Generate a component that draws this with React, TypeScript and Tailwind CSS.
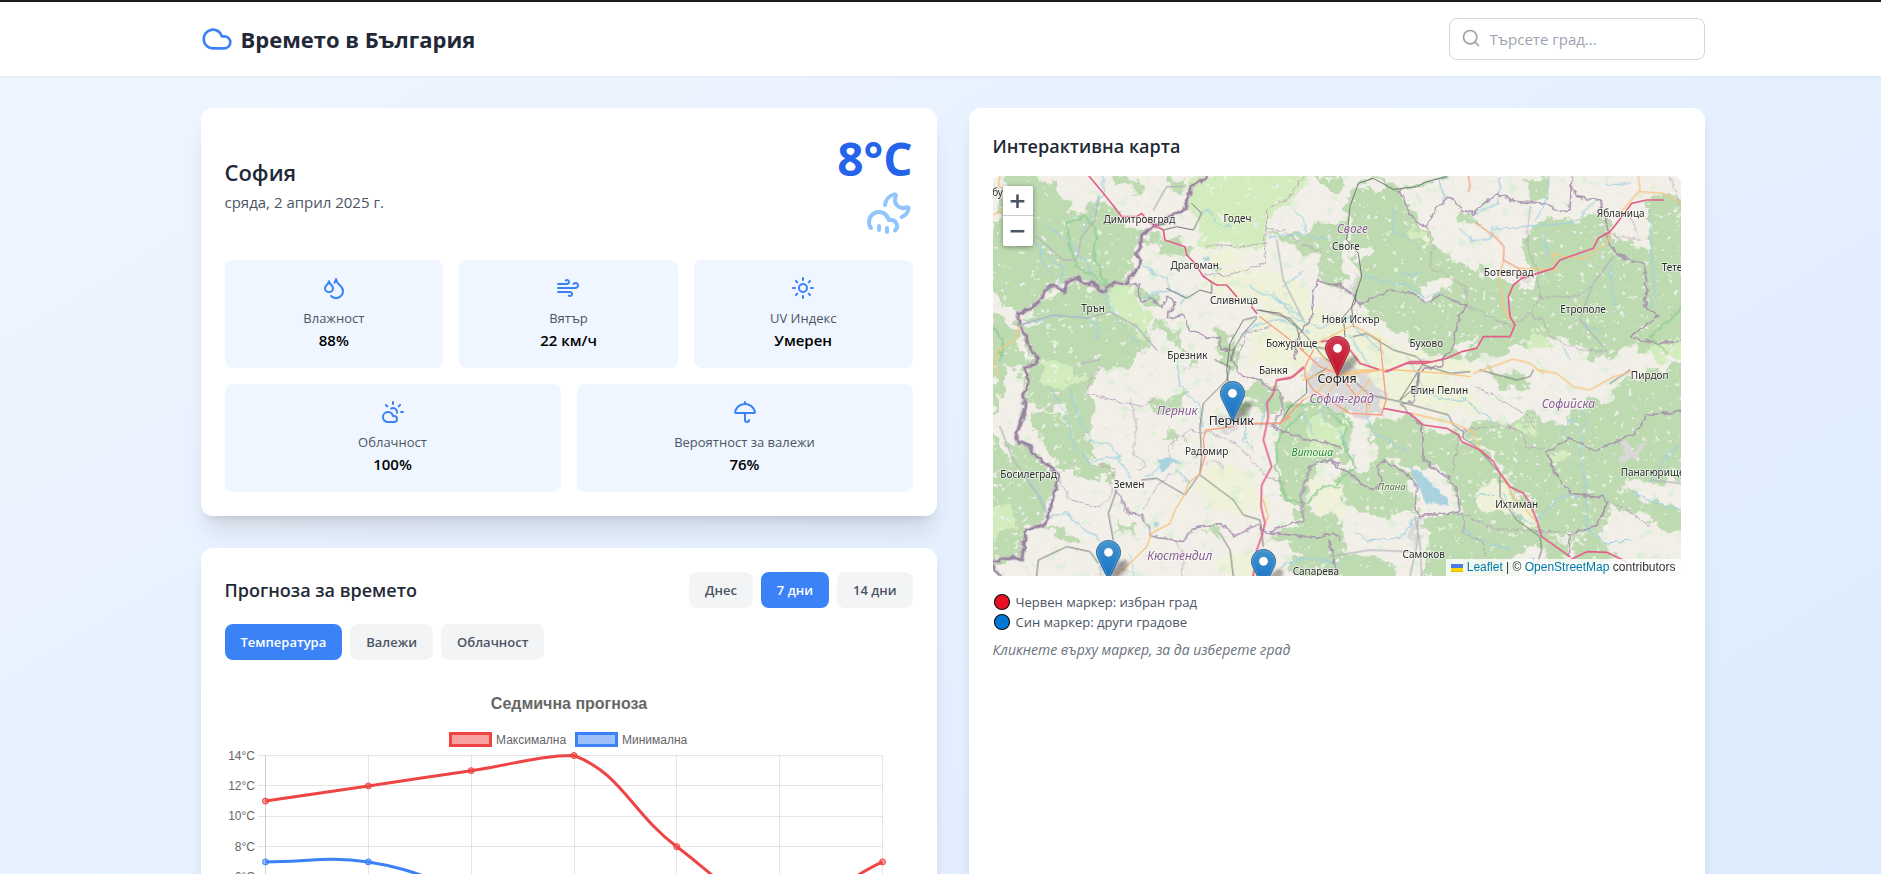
import { useState } from 'react';
import type { ReactNode } from 'react';
import { Cloud, CloudMoonRain, CloudSun, Droplets, Search, Sun, Umbrella, Wind } from 'lucide-react';

type Sector = 'nw' | 'ne' | 'sw' | 'se' | 'c';
type Shape = [Sector, string];

const origin: Record<Sector, string> = {
  nw: 'translate(-69 -168)',
  ne: 'translate(1011 -48)',
  sw: 'translate(-69 552)',
  se: 'translate(1011 582)',
  c: 'translate(651 342)',
};

const forests: Shape[] = [
  ['nw', 'M150 160L240 180L290 240L330 270L380 250L440 300L510 340L500 400L470 480L400 510L350 480L290 485L240 500L190 550L140 580L110 540L60 500V300L95 300L110 160Z'],
  ['nw', 'M410 230L450 280L430 300L380 250ZM410 160L450 200L520 220L500 190L450 160ZM600 190L640 170L650 200L610 220Z'],
  ['nw', 'M320 500L480 490L505 540L540 600L545 660L500 720L480 740H200L140 610L220 540Z'],
  ['nw', 'M60 590L110 600L150 690L200 740H60Z'],
  ['nw', 'M1030 160H1120V215L1060 190ZM1000 330L1120 300V520L1050 480L1040 410L900 350Z'],
  ['nw', 'M530 350L600 340L640 375L680 385L640 410L560 390ZM490 490L560 520L600 560L560 560L510 540ZM550 610L600 620L660 690L610 670ZM720 440L760 450L730 480Z'],
  ['ne', 'M70 80L190 80L220 110L250 170L300 205L310 250L350 280L420 310L470 350L540 370L600 390L620 330L590 310L580 240L610 200L650 180L700 170L800 160L840 180L860 250L900 240L960 270L940 180L950 120L1070 100V570L980 570L900 560L830 610L760 560L650 530L620 550L560 570L460 590L380 610L340 590L300 440L220 410L140 410L70 440L80 350L60 230L45 160Z'],
  ['ne', 'M590 60L660 55L655 120L600 115ZM380 165L430 150L450 200L400 190ZM80 440L180 400L300 430L400 430L410 450L370 560L300 590L220 520L140 470Z'],
  ['sw', 'M170 -10H470L400 20L360 60L350 100L380 160L350 220L370 300L300 250L280 130L230 150L170 120L160 70Z'],
  ['sw', 'M60 0H90L110 40L75 150L60 160ZM60 190L100 300L130 280L110 250L140 245L230 310L260 360L240 440L220 490L160 510L150 600L60 600Z'],
  ['sw', 'M180 160L270 150L320 260L370 310L420 330L430 370L360 360L330 345L270 330L240 270L190 210Z'],
  ['sw', 'M970 450L1010 440L1120 490V600L1020 590L960 560L900 540L890 520L990 510ZM930 200L1000 160L1120 120V300L1060 300L1010 380L1000 450L930 400L915 330L920 260Z'],
  ['sw', 'M530 110L600 120L650 100L640 140L560 150ZM230 500L290 500L330 560L280 540ZM430 470L500 510L470 530ZM400 560L450 590L410 600ZM590 200L650 230L600 260ZM760 120L860 140L800 180ZM960 640L990 560L1120 600V660ZM700 520L760 500L750 530ZM620 20L700 10L690 40Z'],
  ['c', 'M500 -10H790V50L720 170L640 170L580 130L480 90L440 60ZM100 290L200 290L240 340L190 370L130 350ZM0 120L60 130L100 200L60 240L20 180Z'],
  ['c', 'M230 350L300 330L390 380L430 410V520H200L215 420ZM490 400L620 390L660 450L640 520H500Z'],
  ['se', 'M120 150L240 140L290 170L380 200L450 240L500 300L560 360L600 400L640 480L720 510L700 600H400L340 520L330 450L400 430L380 370L350 320L290 280L240 300L190 270L130 240Z'],
  ['se', 'M400 170L560 150L600 130L700 170L740 110L830 90L870 40L920 20L1070 -20V320L960 340L900 330L880 350L940 380L1060 420V490L980 470L940 430L880 420L840 400L830 450L800 480L720 500L640 480L600 380L540 330L510 290L470 240Z'],
  ['se', 'M50 300L150 270L250 320L260 430L180 440L80 420L10 330ZM-40 560L100 550L200 590V630H-40ZM280 450L400 430L560 470L640 500V630H300ZM720 510L800 480L860 560L760 600ZM450 0L600 20L620 90L540 60Z'],
];

const meadows: Shape[] = [
  ['nw', 'M660 190L720 160H1010L980 220L940 260L890 300V370L790 380L700 375L690 300L640 260Z'],
  ['nw', 'M400 510L490 500L540 600L530 650L440 600Z'],
  ['sw', 'M200 20L290 10L340 60L260 90ZM1000 230L1060 190L1120 180V270L1020 300ZM60 450L130 420L140 500L70 540Z'],
  ['ne', 'M600 500L660 520L650 580L600 560ZM960 560L1060 540V600L980 600ZM250 200L290 200L300 250L250 240Z'],
  ['se', 'M540 150L620 160L610 190L560 180ZM650 260L700 250L720 270L670 280Z'],
  ['c', 'M280 400L330 370L360 440L300 480Z'],
];

const farmland: Shape[] = [
  ['c', 'M150 80L250 30L400 100L500 130L640 190L740 210L790 230V370L560 350L520 370L300 260L200 250L120 220Z'],
  ['nw', 'M700 470L890 440L1020 500L1000 620L860 560L720 520ZM690 385L840 400L800 440L700 420Z'],
  ['sw', 'M690 350L760 300L860 370L890 440L800 460L740 450L680 400L640 420ZM1050 400L1120 360V480L1050 450ZM750 580L850 560V648H750Z'],
  ['se', 'M170 60L380 30L400 130L200 110ZM-60 330L30 340L60 430L-50 400Z'],
];

const clearings: Shape[] = [
  ['ne', 'M260 380L350 345L370 370L290 420ZM840 180L900 130L960 150L930 240L850 235ZM70 270L130 260V295L80 300ZM370 550L440 540L400 600ZM540 570L620 570L600 620L500 610Z'],
  ['se', 'M510 110L600 70L670 90L620 130L540 150ZM350 20L470 0L440 70ZM660 90L740 80L700 130ZM560 560L640 520L700 618H580Z'],
  ['nw', 'M230 160L370 160L330 240L270 220ZM60 160L100 160L90 230L60 250ZM150 600L230 590L180 620Z'],
];

const valleys: Shape[] = [['se', 'M430 360L500 320L560 380L620 440V480L540 440L460 420Z']];

const urban: Shape[] = [
  ['c', 'M290 220L380 200L470 250L520 280V370L430 380L340 330L290 290Z'],
  ['c', 'M20 370L90 365L80 420L10 410ZM630 205L660 210L650 230Z'],
  ['se', 'M860 225L940 225L930 262L870 260ZM245 445L275 450L260 520L240 500Z'],
  ['sw', 'M380 600L470 590L480 648H390ZM700 310L760 300L750 330ZM670 270L710 280L690 300Z'],
  ['ne', 'M560 330L600 340L580 360L550 350ZM60 350L90 360L70 430Z'],
];

const lakes: Shape[] = [
  ['se', 'M240 290L275 310L330 365L362 405L290 397L262 350Z'],
  ['sw', 'M565 300L605 292L640 312L605 310L575 338ZM548 490L566 488L560 500Z'],
  ['nw', 'M698 412L715 410L716 424L702 424Z'],
];

const rivers: Shape[] = [
  ['nw', 'M690 280L710 268L725 280L740 310L780 320M515 430L550 460L590 475L600 510L650 530L630 550M235 320L290 360L350 430L380 500M160 615L240 590L350 590L390 620L380 655M190 360L240 420L280 440L265 500M395 168L405 215L385 240L340 330M900 350L990 340L1080 360M840 500L900 530L960 560L1000 600M940 500L1000 450M400 520L450 610L500 670M210 380L220 430L250 470M600 510L520 530M970 270L1000 300L1010 340'],
  ['ne', 'M100 350L240 380L280 410L340 400M190 150V215L250 240M330 60L345 130M385 205L430 245L480 235L490 205L560 205L650 190L730 190L800 120M655 60L650 120L615 180M640 250L660 290M960 150L965 280L975 400L960 440M840 310L845 380L855 440M510 55L505 130L440 160M760 490L810 515M830 75L900 70M270 340L210 345M640 220L655 285M700 560L720 600'],
  ['sw', 'M240 80L290 170L310 260L365 315M360 245L420 250L450 300L485 355M235 470L290 460L330 500L390 540M370 300L450 290M620 0L630 80L690 140L695 200M930 620L1000 595L1060 600L1110 620M840 160L820 240L850 270M180 350L235 460M300 80L320 160L365 245M520 350L580 320M620 330L660 370M390 540L400 640M480 580L490 648'],
  ['se', 'M765 150L750 260L765 330L770 480L830 520L900 510M75 490L110 510L210 505L260 440M430 390L450 370L500 380M520 370L560 440L610 460L660 410L700 375L750 380M400 480L450 510L540 540M910 370L980 400L1053 420M955 340L1020 250L1053 225M400 80L440 120L490 155M110 130L130 190L240 250M690 200L720 150L760 130M30 180L60 260M640 618L700 580'],
  ['c', 'M190 10L260 90L330 110L420 80M100 130L150 100L220 90L300 130M420 140L470 210L480 240M590 200L650 310L700 330L770 330M430 110L520 190M280 370L310 430M330 350L340 400M170 330L150 420'],
];

const parks: Shape[] = [
  ['nw', 'M345 290L290 310L300 380L320 440L380 470L410 510M345 290L380 330L370 400L410 500'],
  ['nw', 'M60 610L100 660L90 720'],
  ['ne', 'M1053 440L1030 470L960 530L1010 580M80 75L140 52L190 90L270 75L350 50'],
  ['sw', 'M1000 160L930 220L915 320L950 420L1010 430L1060 380L1110 380'],
  ['se', 'M0 130L50 170L40 220L75 290L20 340'],
  ['c', 'M230 350L330 340L400 380L430 410'],
];

const stateBorders: Shape[] = [
  ['nw', 'M710 168L665 200L645 265L600 290L515 345L512 380L500 400L512 425L495 455L470 488L430 490L400 515L370 490L350 495L320 475L290 485L285 515L240 495L220 515V530L185 565L140 580L150 620L180 680L205 720'],
  ['sw', 'M205 0L165 25L175 60L160 110L165 140L135 240L170 250L200 290L240 320L265 350L245 430L225 495L170 505L155 600L130 590L69 605M69 620L90 648'],
];

const provinces: Shape[] = [
  ['nw', 'M480 490L505 495L512 545L540 530L575 560L590 532L615 545L590 600L640 585L660 630L710 655L750 650V690L790 685L785 720M1110 500L1045 480L1030 520L1025 590L985 640L975 720'],
  ['ne', 'M0 370L30 375L60 400L90 435L180 390L250 400L290 430L330 405L410 440L385 470L375 550L345 590L330 620L270 630M210 90L240 165L290 205L310 150L360 110L400 150L430 160L500 100L560 125L650 130L690 155L720 150L725 48M725 75L740 110L810 120L830 190L840 260L890 300L940 310L950 360L945 440L985 470L900 530L980 550L1053 540'],
  ['sw', 'M440 390L475 460L515 465L550 530L640 545L670 505L750 490L800 530L860 490L890 520M780 0L820 50L870 60L930 100L940 150L905 200L1000 235L1060 245L1110 265M1110 310L1060 300L1020 320L995 400L1000 480L890 520L950 520L1040 535L1090 520L1110 540'],
  ['se', 'M0 275L60 310L120 360L140 355L155 325L140 290L160 275L230 310L260 350L255 420L270 440L330 430L390 430L380 350L350 320L280 270L275 170L210 100L250 90L270 0M1053 125L950 135L915 190L840 225L790 240L720 205L650 245L670 300L720 370L820 380L830 400L800 470L720 490L715 560M0 510L20 618M610 618V560'],
];

const districts: Shape[] = [
  ['nw', 'M1000 168L960 230L890 270L885 430L780 465L700 460M705 375L790 380L890 370M890 325L940 330L990 370L1050 395M800 720L830 640L900 620'],
  ['ne', 'M290 205L310 260L300 320L410 380V440M600 140L590 250L620 330L630 410L600 460L540 500L440 450L410 440M600 465L640 480L660 530L750 570L830 575M630 410L740 410L780 380M820 220L930 240L900 170M1020 48L1053 130'],
  ['sw', 'M400 20L360 60L350 100L430 120L520 140L560 110M480 120L500 200L490 280L530 320L500 330M610 540L640 580L635 648M270 360L300 420L390 440L430 400L420 370M380 310L430 325L435 370M600 290L590 260L660 210L720 220L800 250L890 350L950 370M520 450L560 380L610 340'],
  ['se', 'M400 180L510 165L570 180L590 230L640 235M370 300L380 220L400 180M400 430V490L460 520L470 560M400 430L500 480L600 480L715 490M440 50L600 140L620 190M830 390L920 440L960 470'],
];

const minorRoads: Shape[] = [
  ['nw', 'M385 230L375 300L335 350L320 420L280 420L200 350M640 200L590 200L550 270M150 615L250 585L350 595L420 575L500 620L560 690M920 360L940 480L1000 600'],
  ['ne', 'M850 290L790 370L770 420L750 480L820 560'],
  ['sw', 'M90 200L130 300L200 400L230 460M390 0L330 10'],
  ['se', 'M0 560L120 540L240 545M255 440L270 520L275 618M265 440L262 520L240 618M960 330L1053 340'],
];

const rails: Shape[] = [
  ['nw', 'M590 505L650 535L690 510L725 520V490L700 465M860 570L930 580L980 620L990 660M785 720L790 690L820 640L860 595M665 250L695 280L670 330L620 320L580 330'],
  ['ne', 'M190 88L130 55L85 70L60 140L50 240L85 280L95 350L65 440L70 500M190 88L260 80L290 65L350 50'],
  ['sw', 'M735 0L780 20L770 60L740 90L700 130L690 200L695 290L690 340L645 405L560 355L515 360M690 345L790 420L820 465L870 480L880 560M440 390L415 460L430 540M200 648L205 600L290 560L360 575L385 610M750 520L780 570L790 648'],
  ['se', 'M80 40L120 75L210 95L355 135L370 165L400 185V205L440 230L510 310V380L560 450L630 500L635 540L610 618M265 0V45L210 90M450 0L560 30L600 20L610 0M840 40L900 0'],
  ['c', 'M150 60L240 85L290 140L340 200L380 230M440 0L435 40L400 80L405 140M60 320L50 240L60 160L100 90L140 80M430 140L470 130L550 180L620 200L640 220L570 330M90 402L210 400L240 350L290 310V270L350 235M310 170L370 180M640 225L720 250L780 245'],
];

const primaryRoads: Shape[] = [
  ['nw', 'M90 168L85 200L120 210M69 285L95 270M150 620L130 660L85 690L75 720'],
  ['ne', 'M925 48L930 90L870 160M930 95L1000 100L1053 130M565 325L680 330L665 280L700 290L760 295L830 250L840 220M522 300L505 350L520 440L540 480M430 640L550 597L600 610L640 640'],
  ['sw', 'M690 340L655 370L640 410L615 450L600 490L545 520L530 560L490 600L440 645M880 420L895 470L880 500M75 0L80 50M1000 60L1110 20'],
  ['se', 'M245 130L370 160L430 185L450 240M510 310L560 390L620 455M620 0L680 10L730 50L780 60L850 20L910 5M0 20L160 0'],
  ['c', 'M320 160L430 105L510 150M380 250L460 240L560 240L700 250L780 260M385 255L330 190M360 260L330 300L280 330M400 255L500 240M430 330L480 270M380 270L350 320M470 370V300'],
];

const trunkRoads: Shape[] = [
  ['ne', 'M415 48L420 75L415 95M437 188L500 235L522 260L520 300L565 325L575 350'],
  ['sw', 'M790 200L710 210L700 235L705 290L690 340M850 190L930 190L960 170'],
  ['c', 'M150 80L280 180M270 175L330 230L380 250M510 150L528 330L515 375L420 370L310 300L285 260V230L310 180M400 270L440 320L480 345M280 330L210 400L90 402'],
];

const motorways: Shape[] = [
  ['nw', 'M357 168L400 220L440 270L455 290L500 290L515 280L535 305L580 330L585 360L645 380L650 405L675 430L700 470L740 495H770L800 530M845 560L860 580'],
  ['ne', 'M165 635L230 610H285L350 595L395 575L440 565L460 530H540L555 495L540 470L535 410L550 375L575 355L670 325L690 300L760 275L790 265L805 235L840 215L880 165L905 130L950 120H1000'],
  ['sw', 'M1000 20L970 50L920 60L910 100L890 130L895 170L880 240L905 320L875 375L873 440L885 490L875 530L860 570L850 648'],
  ['se', 'M160 115L240 130L280 165L350 175L385 195L395 215L450 240L490 275L510 310L540 350L580 370L600 400L620 450L635 500L720 560M720 570L770 545L830 547L890 575'],
  ['c', 'M335 155L370 150M420 180L450 220L505 238M530 245L600 215H660M280 235L240 265L205 270'],
];

type Label = { at: Sector; x: number; y: number; text: string; kind?: 'city' | 'region' | 'nature' | 'hill'; anchor?: 'start' | 'end' };

const labels: Label[] = [
  { at: 'nw', x: 96, y: 227, text: 'буш' },
  { at: 'nw', x: 508, y: 309, text: 'Димитровград' },
  { at: 'nw', x: 802, y: 306, text: 'Годеч' },
  { at: 'nw', x: 674, y: 448, text: 'Драгоман' },
  { at: 'nw', x: 792, y: 551, text: 'Сливница' },
  { at: 'nw', x: 369, y: 576, text: 'Трън' },
  { at: 'nw', x: 965, y: 682, text: 'Божурище' },
  { at: 'nw', x: 652, y: 717, text: 'Брезник' },
  { at: 'ne', x: 67, y: 218, text: 'Своге', kind: 'region' },
  { at: 'ne', x: 48, y: 269, text: 'Своге' },
  { at: 'ne', x: 872, y: 172, text: 'Ябланица' },
  { at: 'ne', x: 536, y: 348, text: 'Ботевград' },
  { at: 'ne', x: 995, y: 332, text: 'Тетевен', anchor: 'start' },
  { at: 'ne', x: 759, y: 460, text: 'Етрополе' },
  { at: 'ne', x: 289, y: 560, text: 'Бухово' },
  { at: 'c', x: 422, y: 98, text: 'Нови Искър' },
  { at: 'c', x: 381, y: 278, text: 'София', kind: 'city' },
  { at: 'c', x: 395, y: 340, text: 'София-град', kind: 'region' },
  { at: 'sw', x: 910, y: 41, text: 'Банкя' },
  { at: 'sw', x: 784, y: 196, text: 'Перник', kind: 'city' },
  { at: 'sw', x: 622, y: 165, text: 'Перник', kind: 'region' },
  { at: 'sw', x: 710, y: 286, text: 'Радомир' },
  { at: 'sw', x: 176, y: 354, text: 'Босилеград' },
  { at: 'sw', x: 477, y: 383, text: 'Земен' },
  { at: 'sw', x: 629, y: 600, text: 'Кюстендил', kind: 'region' },
  { at: 'sw', x: 1027, y: 288, text: 'Витоша', kind: 'nature' },
  { at: 'sw', x: 968, y: 646, text: 'Сапарева', anchor: 'start' },
  { at: 'se', x: 959, y: 26, text: 'Пирдоп' },
  { at: 'se', x: 328, y: 73, text: 'Елин Пелин' },
  { at: 'se', x: 715, y: 115, text: 'Софийска', kind: 'region' },
  { at: 'se', x: 872, y: 318, text: 'Панагюрище', anchor: 'start' },
  { at: 'se', x: 560, y: 415, text: 'Ихтиман' },
  { at: 'se', x: 281, y: 564, text: 'Самоков' },
  { at: 'se', x: 185, y: 361, text: 'Плана', kind: 'hill' },
];

const labelStyle = {
  town: 'fill-[#2b2b2b] text-[30px]',
  city: 'fill-[#222222] text-[37px]',
  region: 'fill-[#875a92] text-[36px] italic',
  nature: 'fill-[#22852f] text-[31px] italic',
  hill: 'fill-[#52704c] text-[29px] italic',
};

function Layer({ shapes, ...rest }: { shapes: Shape[] } & React.SVGProps<SVGGElement>) {
  return (
    <g {...rest}>
      {shapes.map(([at, d]) => (
        <path key={d} d={d} transform={origin[at]} />
      ))}
    </g>
  );
}

function Pin({ x, y, selected }: { x: number; y: number; selected?: boolean }) {
  return (
    <g transform={`translate(${x * 3} ${y * 3}) scale(3)`}>
      <path d="M12.5 41C14 33 19 25 25 21C31 18 34 22 31 27C27 34 20 38 12.5 41Z" fill="#000" opacity="0.3" filter="url(#pin-shadow)" />
      <path
        d="M12.5 0.5C5.9 0.5 0.5 5.8 0.5 12.4C0.5 14.9 1.3 17 2.5 19.2L12.5 40L22.5 19.2C23.7 17 24.5 14.9 24.5 12.4C24.5 5.8 19.1 0.5 12.5 0.5Z"
        fill={selected ? 'url(#pin-red)' : 'url(#pin-blue)'}
        stroke={selected ? '#a3203a' : '#2e6c97'}
      />
      <path
        d="M12.5 1.6C6.5 1.6 1.6 6.4 1.6 12.4C1.6 14.7 2.4 16.7 3.5 18.7L12.5 37.4L21.5 18.7C22.6 16.7 23.4 14.7 23.4 12.4C23.4 6.4 18.5 1.6 12.5 1.6Z"
        fill="none"
        stroke="#fff"
        strokeOpacity="0.15"
      />
      <circle cx="12.5" cy="12.3" r="4.6" fill="#fff" stroke={selected ? '#a3203a' : '#2e6c97'} strokeOpacity="0.6" strokeWidth="0.6" />
    </g>
  );
}

function MapDrawing() {
  return (
    <svg viewBox="0 0 2064 1200" preserveAspectRatio="xMidYMid slice" className="block h-full w-full" role="img" aria-label="Карта на България">
      <defs>
        <filter id="ragged" x="0" y="0" width="2064" height="1200" filterUnits="userSpaceOnUse">
          <feTurbulence type="fractalNoise" baseFrequency="0.022" numOctaves="4" seed="7" />
          <feDisplacementMap in="SourceGraphic" scale="75" xChannelSelector="R" yChannelSelector="G" />
        </filter>
        <filter id="wobble" x="0" y="0" width="2064" height="1200" filterUnits="userSpaceOnUse">
          <feTurbulence type="fractalNoise" baseFrequency="0.045" numOctaves="2" seed="3" />
          <feDisplacementMap in="SourceGraphic" scale="20" xChannelSelector="R" yChannelSelector="G" />
        </filter>
        <filter id="groves" x="0" y="0" width="2064" height="1200" filterUnits="userSpaceOnUse">
          <feTurbulence type="fractalNoise" baseFrequency="0.024 0.032" numOctaves="4" seed="12" />
          <feColorMatrix values="0 0 0 0 0.74  0 0 0 0 0.86  0 0 0 0 0.68  14 0 0 0 -8.9" />
        </filter>
        <filter id="glades" x="0" y="0" width="2064" height="1200" filterUnits="userSpaceOnUse">
          <feTurbulence type="fractalNoise" baseFrequency="0.045" numOctaves="4" seed="31" />
          <feColorMatrix values="0 0 0 0 0.9  0 0 0 0 0.93  0 0 0 0 0.84  0 14 0 0 -9.8" />
        </filter>
        <filter id="hamlets" x="0" y="0" width="2064" height="1200" filterUnits="userSpaceOnUse">
          <feTurbulence type="fractalNoise" baseFrequency="0.05" numOctaves="2" seed="55" />
          <feColorMatrix values="0 0 0 0 0.85  0 0 0 0 0.84  0 0 0 0 0.84  0 0 14 0 -9.9" />
        </filter>
        <filter id="pin-shadow" x="-30%" y="-30%" width="160%" height="160%">
          <feGaussianBlur stdDeviation="1.6" />
        </filter>
        <linearGradient id="pin-blue" x1="0" y1="0" x2="0" y2="1">
          <stop offset="0" stopColor="#4394cf" />
          <stop offset="0.55" stopColor="#267fca" />
          <stop offset="1" stopColor="#1f70bd" />
        </linearGradient>
        <linearGradient id="pin-red" x1="0" y1="0" x2="0" y2="1">
          <stop offset="0" stopColor="#cf3b55" />
          <stop offset="0.55" stopColor="#c82036" />
          <stop offset="1" stopColor="#b8122b" />
        </linearGradient>
      </defs>
      <rect width="2064" height="1200" fill="#f2efe9" />
      <g filter="url(#ragged)">
        <Layer shapes={farmland} fill="#eff2d8" />
      </g>
      <rect width="2064" height="1200" filter="url(#groves)" opacity="0.85" />
      <g filter="url(#ragged)">
        <Layer shapes={forests} fill="#bddab1" />
        <Layer shapes={meadows} fill="#d3ecbd" />
        <Layer shapes={clearings} fill="#f2efe9" />
        <Layer shapes={valleys} fill="#eff2d8" />
        <Layer shapes={urban} fill="#dbd8d8" />
      </g>
      <rect width="2064" height="1200" filter="url(#glades)" opacity="0.7" />
      <rect width="2064" height="1200" filter="url(#hamlets)" />
      <g filter="url(#wobble)" fill="none" strokeLinejoin="round" strokeLinecap="round">
        <Layer shapes={lakes} fill="#aad3df" />
        <Layer shapes={rivers} stroke="#a3d1e0" strokeWidth="3.5" />
        <Layer shapes={parks} stroke="#8fcc92" strokeWidth="6" strokeOpacity="0.8" />
        <Layer shapes={districts} stroke="#b39db5" strokeWidth="3" strokeDasharray="10 4" strokeOpacity="0.85" />
        <Layer shapes={provinces} stroke="#a68dab" strokeWidth="5" strokeOpacity="0.85" />
        <Layer shapes={stateBorders} stroke="#c9b5cb" strokeWidth="14" strokeOpacity="0.55" />
        <Layer shapes={stateBorders} stroke="#94809a" strokeWidth="8" />
      </g>
      <g fill="none" strokeLinejoin="round" strokeLinecap="round">
        <Layer shapes={minorRoads} stroke="#b5b7bb" strokeWidth="4" />
        <Layer shapes={rails} stroke="#777777" strokeWidth="3" />
        <Layer shapes={primaryRoads} stroke="#f8c680" strokeWidth="4" />
        <Layer shapes={trunkRoads} stroke="#f99f80" strokeWidth="4" />
        <Layer shapes={motorways} stroke="#e3608a" strokeWidth="5" />
      </g>
      <g className="font-['Noto_Sans',sans-serif]" stroke="#fff" strokeOpacity="0.7" strokeWidth="5" strokeLinejoin="round" paintOrder="stroke">
        {labels.map((l) => (
          <text key={l.text + l.x} x={l.x} y={l.y} textAnchor={l.anchor ?? 'middle'} transform={origin[l.at]} className={labelStyle[l.kind ?? 'town']}>
            {l.text}
          </text>
        ))}
      </g>
      <Pin x={332} y={160} selected />
      <Pin x={227} y={205} />
      <Pin x={103} y={364} />
      <Pin x={258} y={373} />
    </svg>
  );
}

function MapCard() {
  return (
    <section className="rounded-xl bg-white p-6 shadow-lg">
      <h2 className="mb-4 text-lg leading-7 font-semibold text-[#1f2937]">Интерактивна карта</h2>
      <div className="relative h-[400px] overflow-hidden rounded-lg bg-[#f2efe9]">
        <MapDrawing />
        <div className="absolute top-[10px] left-[10px] flex w-[30px] flex-col overflow-hidden rounded-xs bg-white font-['DejaVu_Sans',sans-serif] text-[22px] font-bold text-[#4b5563] shadow-[0_1px_5px_rgba(0,0,0,0.4)]">
          <button type="button" aria-label="Приближи" className="h-[30px] border-b border-[#cccccc] leading-[28px]">
            +
          </button>
          <button type="button" aria-label="Отдалечи" className="h-[30px] leading-[28px]">
            −
          </button>
        </div>
        <div className="absolute right-0 bottom-0 flex items-center bg-white/80 px-[5px] font-['Liberation_Sans',sans-serif] text-xs leading-[17px] whitespace-pre text-[#333333]">
          <a href="https://leafletjs.com" className="flex items-center gap-1 text-[#0078a8]">
            <svg viewBox="0 0 12 8" className="h-2 w-3" aria-hidden="true">
              <path fill="#4c7be1" d="M0 0h12v4H0z" />
              <path fill="#ffd500" d="M0 4h12v3H0z" />
              <path fill="#e0bc00" d="M0 7h12v1H0z" />
            </svg>
            Leaflet
          </a>
          <span> | © </span>
          <a href="https://www.openstreetmap.org/copyright" className="text-[#0078a8]">
            OpenStreetMap
          </a>
          <span> contributors</span>
        </div>
      </div>
      <div className="mt-4 text-[13px] leading-5 text-[#4b5563]">
        <p className="flex items-center gap-[5px]">
          <svg viewBox="0 0 18 18" className="size-[18px]" aria-hidden="true">
            <circle cx="9" cy="9" r="7.5" fill="#e81123" stroke="#111" strokeWidth="1.2" />
          </svg>
          Червен маркер: избран град
        </p>
        <p className="flex items-center gap-[5px]">
          <svg viewBox="0 0 18 18" className="size-[18px]" aria-hidden="true">
            <circle cx="9" cy="9" r="7.5" fill="#0078d7" stroke="#111" strokeWidth="1.2" />
          </svg>
          Син маркер: други градове
        </p>
        <p className="mt-2 text-sm text-[#6b7280] italic">Кликнете върху маркер, за да изберете град</p>
      </div>
    </section>
  );
}

function Stat({ icon, label, value }: { icon: ReactNode; label: string; value: string }) {
  return (
    <div className="flex flex-col items-center rounded-lg bg-[#eff6ff] p-4 text-center">
      <span className="mb-2 text-[#3b82f6]">{icon}</span>
      <span className="text-[13px] leading-5 text-[#4b5563]">{label}</span>
      <span className="text-[15px] leading-6 font-semibold text-black">{value}</span>
    </div>
  );
}

function CurrentWeather() {
  return (
    <section className="rounded-xl bg-white p-6 shadow-xl">
      <div className="mb-6 flex items-center justify-between">
        <div>
          <h2 className="text-[22px] leading-9 font-semibold text-[#1f2937]">София</h2>
          <p className="text-[15px] leading-6 text-[#4b5563]">сряда, 2 април 2025 г.</p>
        </div>
        <div className="flex flex-col items-end gap-1">
          <span className="text-[46px] leading-[52px] font-bold text-[#2563eb]">8°C</span>
          <CloudMoonRain className="size-12 text-[#93c5fd]" />
        </div>
      </div>
      <div className="grid grid-cols-3 gap-4">
        <Stat icon={<Droplets />} label="Влажност" value="88%" />
        <Stat icon={<Wind />} label="Вятър" value="22 км/ч" />
        <Stat icon={<Sun />} label="UV Индекс" value="Умерен" />
      </div>
      <div className="mt-4 grid grid-cols-2 gap-4">
        <Stat icon={<CloudSun />} label="Облачност" value="100%" />
        <Stat icon={<Umbrella />} label="Вероятност за валежи" value="76%" />
      </div>
    </section>
  );
}

const xAt = (i: number) => 40.5 + (i * 617) / 6;
const yAt = (v: number) => 71.5 + (14 - v) * 15.2;

function splinePath(values: number[], tension = 0.4) {
  const pts = values.map((v, i) => ({ x: xAt(i), y: yAt(v) }));
  const controls = pts.map((p, i) => {
    const a = pts[Math.max(i - 1, 0)];
    const b = pts[Math.min(i + 1, pts.length - 1)];
    const d01 = Math.hypot(p.x - a.x, p.y - a.y);
    const d12 = Math.hypot(b.x - p.x, b.y - p.y);
    const fa = (tension * d01) / (d01 + d12);
    const fb = (tension * d12) / (d01 + d12);
    const clamp = (y: number) => Math.max(y, 71.5);
    return {
      inX: p.x - fa * (b.x - a.x),
      inY: clamp(p.y - fa * (b.y - a.y)),
      outX: p.x + fb * (b.x - a.x),
      outY: clamp(p.y + fb * (b.y - a.y)),
    };
  });
  return pts
    .map((p, i) => {
      if (i === 0) return `M${p.x} ${p.y}`;
      const o = controls[i - 1];
      const c = controls[i];
      return `C${o.outX} ${o.outY} ${c.inX} ${c.inY} ${p.x} ${p.y}`;
    })
    .join('');
}

const series = [
  { name: 'Минимална', color: '#3b82f6', values: [7, 7, 5, 3, 1, 0, 1] },
  { name: 'Максимална', color: '#ef4444', values: [11, 12, 13, 14, 8, 4, 7] },
];
const days = ['2.04', '3.04', '4.04', '5.04', '6.04', '7.04', '8.04'];
const ticks = [14, 12, 10, 8, 6, 4, 2, 0, -2, -4];

function Chart() {
  return (
    <svg viewBox="0 0 688 400" className="mt-6 block w-full font-['Liberation_Sans',sans-serif] text-xs" role="img" aria-label="Седмична прогноза">
      <text x="344" y="25" textAnchor="middle" fill="#666" className="text-base font-bold">
        Седмична прогноза
      </text>
      <g fill="#666">
        <rect x="225.5" y="49.5" width="40" height="12" fill="#ef4444" fillOpacity="0.5" stroke="#ef4444" strokeWidth="3" />
        <text x="271" y="60">Максимална</text>
        <rect x="351.5" y="49.5" width="40" height="12" fill="#3b82f6" fillOpacity="0.5" stroke="#3b82f6" strokeWidth="3" />
        <text x="397" y="60">Минимална</text>
      </g>
      {ticks.map((t) => (
        <g key={t}>
          <line x1="33" x2="657.5" y1={Math.floor(yAt(t)) + 0.5} y2={Math.floor(yAt(t)) + 0.5} stroke="#000" strokeOpacity="0.1" />
          <text x="30" y={yAt(t) + 4} textAnchor="end" fill="#666">
            {t}°C
          </text>
        </g>
      ))}
      {days.map((d, i) => (
        <g key={d}>
          <line x1={Math.floor(xAt(i)) + 0.5} x2={Math.floor(xAt(i)) + 0.5} y1="71.5" y2="352" stroke="#000" strokeOpacity={i === 0 ? 0.2 : 0.1} />
          <text x={xAt(i)} y="372" textAnchor="middle" fill="#666">
            {d}
          </text>
        </g>
      ))}
      {series.map((s) => (
        <g key={s.name}>
          <path d={splinePath(s.values)} fill="none" stroke={s.color} strokeWidth="3" />
          {s.values.map((v, i) => (
            <circle key={i} cx={xAt(i)} cy={yAt(v)} r="3" fill={s.color} fillOpacity="0.5" stroke={s.color} />
          ))}
        </g>
      ))}
    </svg>
  );
}

function Pills({ options, value, onChange }: { options: string[]; value: string; onChange: (v: string) => void }) {
  return (
    <div className="flex gap-2">
      {options.map((o) => (
        <button
          key={o}
          type="button"
          aria-pressed={o === value}
          onClick={() => onChange(o)}
          className={
            o === value
              ? 'rounded-lg bg-[#3b82f6] px-4 py-2 text-[13px] leading-5 font-semibold text-white'
              : 'rounded-lg bg-[#f3f4f6] px-4 py-2 text-[13px] leading-5 font-semibold text-[#4b5563]'
          }
        >
          {o}
        </button>
      ))}
    </div>
  );
}

function Forecast() {
  const [range, setRange] = useState('7 дни');
  const [metric, setMetric] = useState('Температура');
  return (
    <section className="rounded-xl bg-white p-6 shadow-lg">
      <div className="mb-4 flex items-center justify-between">
        <h2 className="text-lg leading-7 font-semibold text-[#1f2937]">Прогноза за времето</h2>
        <Pills options={['Днес', '7 дни', '14 дни']} value={range} onChange={setRange} />
      </div>
      <Pills options={['Температура', 'Валежи', 'Облачност']} value={metric} onChange={setMetric} />
      <Chart />
    </section>
  );
}

export default function App() {
  return (
    <div className="h-screen overflow-y-auto border-t-2 border-[#1c1c1c] font-['Open_Sans','Noto_Sans',sans-serif] [scrollbar-width:none]">
      <div className="min-h-full bg-linear-to-br from-[#eff6ff] to-[#dbeafe]">
        <header className="bg-white pl-6 shadow-xs">
          <div className="mx-auto flex max-w-[1536px] items-center justify-between px-4 py-4">
            <div className="flex items-center gap-2">
              <Cloud className="size-8 text-[#3b82f6]" />
              <h1 className="text-[22px] leading-8 font-bold text-[#1f2937]">Времето в България</h1>
            </div>
            <label className="relative w-64">
              <Search className="absolute top-[10px] left-3 size-5 text-[#9ca3af]" />
              <input
                type="text"
                aria-label="Търсете град"
                placeholder="Търсете град..."
                className="w-full rounded-lg border border-[#d1d5db] bg-white py-2 pr-4 pl-10 text-[15px] leading-6 text-[#1f2937] placeholder:text-[#9ca3af]"
              />
            </label>
          </div>
        </header>
        <main className="pl-6">
          <div className="mx-auto grid max-w-[1536px] grid-cols-2 gap-8 px-4 py-8">
            <div className="flex flex-col gap-8">
              <CurrentWeather />
              <Forecast />
            </div>
            <MapCard />
          </div>
        </main>
      </div>
    </div>
  );
}
